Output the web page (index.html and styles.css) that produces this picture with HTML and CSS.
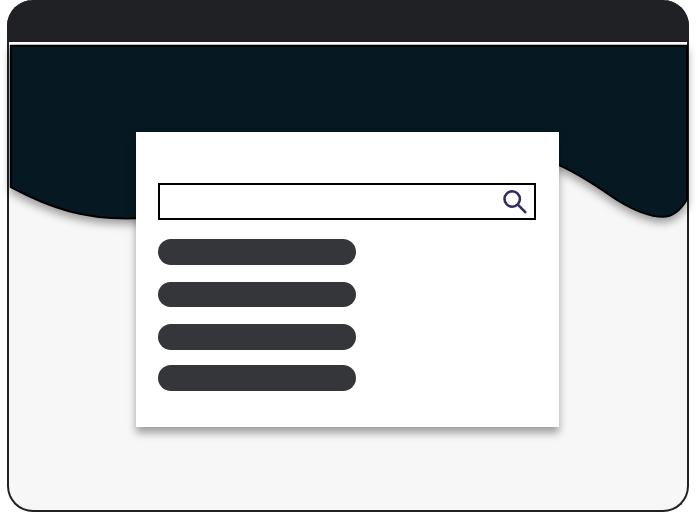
FILE: index.html
```html
<!DOCTYPE html>
<html lang="en">
<head>
<meta charset="utf-8">
<title>Search</title>
<link rel="stylesheet" href="styles.css">
</head>
<body>
<main class="window">
  <header class="titlebar"></header>
  <svg class="wave" viewBox="0 0 698 512" aria-hidden="true">
    <path d="M10.800 45.800H687V199.500C680 211 673 216.800 663 216.800C648 216.800 629 207.500 617 200C608 194 580 173 551 161.500C450 125 300 218 136 218.300C85 220 50 208 10.800 187Z"/>
  </svg>
  <section class="card">
    <div class="search">
      <svg class="search-icon" viewBox="0 0 24 24" aria-hidden="true">
        <circle cx="9.2" cy="9" r="7.700"/>
        <path d="M14.600 14.400L23 22.800"/>
      </svg>
    </div>
    <div class="results">
      <div class="result"></div>
      <div class="result"></div>
      <div class="result"></div>
      <div class="result last"></div>
    </div>
  </section>
</main>
</body>
</html>
```
FILE: styles.css
```css
* {
  box-sizing: border-box;
}

body {
  margin: 0;
  height: 512px;
  overflow: hidden;
  background: #fff;
  font-family: "Liberation Sans", sans-serif;
}

.window {
  width: 682.400px;
  height: 512px;
  margin-left: 6.600px;
  border: 2px solid #202125;
  border-top: 0;
  border-radius: 26px;
  background: #f7f7f7;
}

.titlebar {
  height: 45px;
  margin: 0 -2px;
  border: solid #202125;
  border-width: 0 2px;
  border-radius: 26px 26px 0 0;
  background: linear-gradient(#202125 42.500px, #fff 42.500px);
}

.wave {
  position: absolute;
  left: 0;
  top: 0;
  width: 698px;
  height: 512px;
  fill: #061923;
  stroke: #000;
  stroke-width: 2;
  filter: drop-shadow(0 5px 4px rgba(0, 0, 0, 0.36));
}

.card {
  position: relative;
  width: 422.600px;
  height: 294.600px;
  margin: 87.300px 0 0 127.900px;
  padding: 51px 23px 0 21.400px;
  background: #fff;
  box-shadow: 0 6px 8px rgba(0, 0, 0, 0.36);
}

.search {
  display: flex;
  align-items: center;
  justify-content: flex-end;
  height: 37px;
  padding-right: 7.500px;
  border: 2px solid #000;
}

.search-icon {
  width: 24px;
  height: 24px;
  fill: none;
  stroke: #322d60;
  stroke-width: 2.600;
}

.results {
  display: flex;
  flex-direction: column;
  gap: 17px;
  width: 198.500px;
  padding-top: 18.500px;
}

.result {
  height: 25.800px;
  border-radius: 13px;
  background: #35363a;
}

.last {
  margin-top: -2px;
}
```
